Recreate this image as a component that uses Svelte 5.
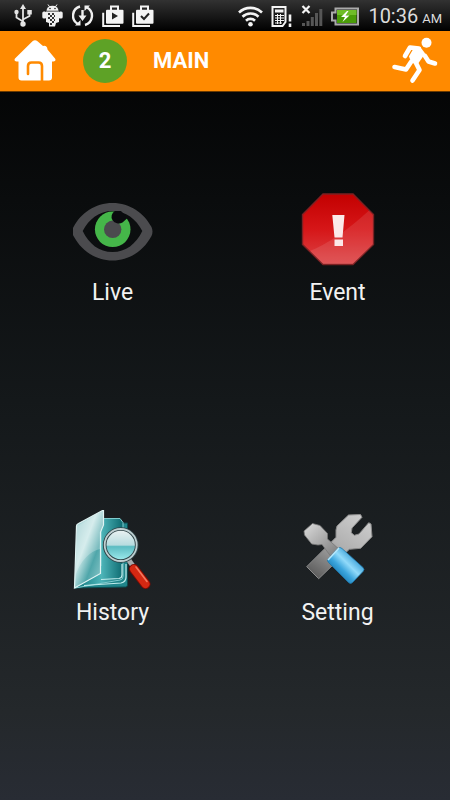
<script lang="ts">
    type MenuItem = { id: string, label: string }

    let alarms = $state(2)
    const items: MenuItem[] = [
        { id: "live", label: "Live" },
        { id: "event", label: "Event" },
        { id: "history", label: "History" },
        { id: "setting", label: "Setting" },
    ]
</script>

<div class="screen">
    <div class="status">
        <div class="tray">
            <!-- usb -->
            <svg width="22" height="23" viewBox="0 0 22 23" fill="none" stroke="#e4e4e4" stroke-width="1.8">
                <path d="M11 4v17M11 17.500 4.500 13.500V8M11 15.500l6.500-3.500V8" />
                <path d="M11 0 8 5h6z" fill="#e4e4e4" stroke="none" />
                <circle cx="4.500" cy="8" r="2.200" fill="#e4e4e4" stroke="none" />
                <circle cx="11" cy="20" r="2.700" fill="#e4e4e4" stroke="none" />
                <path d="M15.300 6h4.500v4.500h-4.500z" fill="#e4e4e4" stroke="none" />
            </svg>
            <!-- android -->
            <svg width="22" height="23" viewBox="0 0 22 23" fill="#f0f0f0">
                <path d="M4.500 6.700a6 5 0 0 1 12 0z" />
                <path d="M6 .5l2 3M15 .5l-2 3" stroke="#f0f0f0" />
                <path d="M4 7.500h13V18l-3 1-1 3.500H7V19l-3-1z" />
                <rect x=".3" y="7.500" width="4" height="7" rx="1.500" />
                <rect x="16.700" y="7.500" width="4" height="7" rx="1.500" />
                <circle cx="8" cy="4.500" r=".8" fill="#222" />
                <circle cx="13" cy="4.500" r=".8" fill="#222" />
                <path d="M6 9h2v2H6zM10 9h2v2h-2zM8 11h2v2H8zM12 11h1v2h-1zM6 13h2v2H6zM10 13h2v2h-2zM8 15h2v2H8zM12 15h1v2h-1zM10 17h2v2h-2zM8 19h2v2H8z" fill="#333" />
            </svg>
            <!-- sync -->
            <svg width="22" height="23" viewBox="0 0 22 23" fill="none" stroke="#f0f0f0" stroke-width="2.400">
                <path d="M8 2.500a9.500 9.500 0 0 0-2 17.500M13 21a9.500 9.500 0 0 0 2-17.500" />
                <path d="M10.500 6v8" />
                <path d="M6.500 11.500h8L10.500 17zM3 21.500h5.500V16zM18 1.500h-5.500V7z" fill="#f0f0f0" stroke="none" />
            </svg>
            <!-- store -->
            <svg width="22" height="23" viewBox="0 0 22 23" fill="none" stroke="#f4f4f4" stroke-width="2">
                <path d="M1.200 8.700V22H18" />
                <path d="M9 6V2.500h7V6" />
                <rect x="4" y="5.700" width="17.500" height="14" rx="1" fill="#f4f4f4" stroke="none" />
                <path d="M10 8.500v7l6-3.500z" fill="#222" stroke="none" />
            </svg>
            <!-- store, updated -->
            <svg width="22" height="23" viewBox="0 0 22 23" fill="none" stroke="#f4f4f4" stroke-width="2">
                <path d="M1.200 8.700V22H18" />
                <path d="M9 6V2.500h7V6" />
                <rect x="4" y="5.700" width="17.500" height="14" rx="1" fill="#f4f4f4" stroke="none" />
                <path d="M9 12l3 3 5-5.500" stroke="#222" />
            </svg>
        </div>
        <div class="tray">
            <!-- wifi -->
            <svg width="25" height="23" viewBox="0 0 25 23" fill="none" stroke="#f4f4f4" stroke-width="2.600">
                <path d="M1 8.500a16.500 16.500 0 0 1 23 0M4.500 12.700a11.500 11.500 0 0 1 16 0M8 16.700a6.500 6.500 0 0 1 9 0" />
                <circle cx="12.500" cy="20.300" r="2.300" fill="#f4f4f4" stroke="none" />
            </svg>
            <!-- sim card -->
            <svg width="21" height="23" viewBox="0 0 21 23" fill="none" stroke="#f4f4f4">
                <path d="M1.500 3h13v15l-3 4h-10z" stroke-width="2" />
                <path d="M4 7h8.500" stroke-width="3" />
                <path d="M4 11.500h9M4 14h9M4 16.500h9M4 19h7M6.500 10v10M9.500 10v10" />
                <path d="M19 10.500v7M19 19.500V23" stroke-width="2.600" />
            </svg>
            <!-- no signal -->
            <svg width="23" height="23" viewBox="0 0 23 23" fill="#565656">
                <path d="M2 19h3v3H2zM6.500 17h3v5h-3zM10.800 13h3v9h-3zM15 9h3v13h-3zM19.300 5h3v17h-3z" />
                <path d="M2.500 2l7 7M9.500 2l-7 7" stroke="#f4f4f4" stroke-width="2.200" />
            </svg>
            <!-- battery -->
            <svg width="29" height="23" viewBox="0 0 29 23">
                <path d="M4.500 4.500H27v16H4.500v-4H1v-8h3.500z" fill="#222" stroke="#aaa" stroke-width="2" />
                <path d="M6 6h19.500v13H6z" fill="#4a9c08" />
                <path d="M6 6h19.500v5H6z" fill="#6fbd28" />
                <path d="M16 7l-6 6h4l-2.500 5 7-6.500h-4L17.500 7z" fill="#fff" />
            </svg>
            <time>10:36 <small>AM</small></time>
        </div>
    </div>

    <header>
        <button type="button" class="home" aria-label="Home">
            <svg width="42" height="44" viewBox="0 0 42 44">
                <path d="M18.500 2.300Q21 .3 23.500 2.300L29 7q4-1 4.500 3.500l7.500 9q1.500 2.500-1.500 3H38v16q0 3-3 3H7.500q-3 0-3-3v-16H2.500q-3-.5-1.500-3z" fill="#fff" />
                <path d="M14 35V27q0-3.500 3.500-3.500h7q3.500 0 3.500 3.500v15" fill="none" stroke="#ff8a00" stroke-width="2.600" stroke-linecap="round" />
            </svg>
        </button>
        <span class="badge">{alarms}</span>
        <h1>MAIN</h1>
        <button type="button" class="exit" aria-label="Exit">
            <svg width="48" height="48" viewBox="0 0 48 48" fill="none" stroke="#fff" stroke-width="4.600" stroke-linecap="round" stroke-linejoin="round">
                <circle cx="36.500" cy="5.800" r="5" fill="#fff" stroke="none" />
                <path d="M15 19l5-8.500 9 1" />
                <path d="M25 11l6 1.500 3 4-7 10-5-2-2-5z" fill="#fff" stroke-width="2" />
                <path d="M35 19l3.500 5.500 6.500 2M21 25l-5 7.500L4.500 30M25 24l4.500 9-7 10.500" />
            </svg>
        </button>
    </header>

    <main>
        {#each items as item (item.id)}
            <button type="button" class="item">
                {#if item.id === "live"}
                    <svg width="80" height="80" viewBox="1 1 80 80">
                        <path d="M1.500 38C9 24 23 14 40.500 14S72 24 79.500 38q2 4.500 0 9C72 61 58 71.500 40.500 71.500S9 61 1.500 47q-2.500-4.500 0-9zM10.700 42C17 55 27 63 40.500 63S64 55 70.300 42C64 30 54 22 40.500 22S17 30 10.700 42z" fill="#4b4b4e" fill-rule="evenodd" />
                        <circle cx="40.700" cy="40.300" r="17.800" fill="#45b649" />
                        <circle cx="40.700" cy="40.300" r="8.700" fill="#4b4b4e" />
                        <path d="M43 22a7 6.500 0 1 0 7.500 11.500L55.500 29 49 22z" fill="#0a0b0e" />
                    </svg>
                {:else if item.id === "event"}
                    <svg width="80" height="80" viewBox="1 1 80 80">
                        <defs>
                            <linearGradient id="stop" x2="0" y2="1">
                                <stop offset="0" stop-color="#c30000" />
                                <stop offset=".5" stop-color="#d61618" />
                                <stop offset="1" stop-color="#dc4446" />
                            </linearGradient>
                        </defs>
                        <path d="M26 5h30l20.500 20.500v30L56 75.500H26L5.500 55.500v-30z" fill="url(#stop)" stroke="#7c2022" stroke-width="1.400" />
                        <path d="M72 21.500l4 4.500v29.500L56 75H26L13 62Q40 51 72 21.500z" fill="#fff" opacity=".1" />
                        <path d="M35.300 26h12.200l-2 22.500h-8zM37.500 50.500H46V57h-8.500z" fill="#fbe9e9" />
                    </svg>
                {:else if item.id === "history"}
                    <svg width="80" height="80" viewBox="1 1 80 80">
                        <defs>
                            <linearGradient id="flap" x2="1" y2="1">
                                <stop offset="0" stop-color="#8cc4c6" />
                                <stop offset=".4" stop-color="#c9e7e7" />
                                <stop offset=".65" stop-color="#4fa6aa" />
                                <stop offset="1" stop-color="#9fd2d3" />
                            </linearGradient>
                            <linearGradient id="back">
                                <stop offset="0" stop-color="#0c7379" />
                                <stop offset=".55" stop-color="#4db5b9" />
                                <stop offset="1" stop-color="#0d6a70" />
                            </linearGradient>
                            <linearGradient id="lens" x2="0" y2="1">
                                <stop offset="0" stop-color="#eef3f3" />
                                <stop offset=".5" stop-color="#b8dcdf" />
                                <stop offset=".55" stop-color="#5cbcc2" />
                                <stop offset="1" stop-color="#a2eef0" />
                            </linearGradient>
                        </defs>
                        <path d="M30 14h25.500v62q0 2-2 2L3 79l26-22z" fill="#20858a" stroke="#0c4c50" />
                        <path d="M29 9.500h19l3 4v54q0 3-3 3.500L3 79l26-22z" fill="url(#back)" stroke="#80cccf" />
                        <path d="M54 55v13q0 5-5 6L12 76.500M50 55v11q0 3-3 3.500l-18 1" fill="none" stroke="#c0ecec" stroke-width="1.200" />
                        <path d="M4.500 17q0-1.500 2-2.500L31.500 1v15l-3 7v41.500L2.500 79z" fill="url(#flap)" stroke="#e0f3f3" stroke-width="1.200" />
                        <path d="M5 17L31 2v14l-3 7v17Q12 44 4 65z" fill="#fff" opacity=".25" />
                        <path d="M56 50l5 7" stroke="#a4aaac" stroke-width="5" />
                        <path d="M62 60l11.500 15" stroke="#7d0c05" stroke-width="10" stroke-linecap="round" />
                        <path d="M62 60l11.500 15" stroke="#d42812" stroke-width="8" stroke-linecap="round" />
                        <path d="M64 58l11 14.500" stroke="#f3795f" stroke-width="1.600" stroke-linecap="round" />
                        <circle cx="48.700" cy="36" r="16" fill="url(#lens)" stroke="#304448" stroke-width="3.600" />
                        <circle cx="48.700" cy="36" r="16" fill="none" stroke="#bfd0d2" stroke-width="1.800" />
                    </svg>
                {:else}
                    <svg width="80" height="80" viewBox="1 1 80 80">
                        <defs>
                            <linearGradient id="steel" x1=".9" x2=".2" y2="1">
                                <stop offset="0" stop-color="#cfcfcf" />
                                <stop offset=".5" stop-color="#b0b0b0" />
                                <stop offset="1" stop-color="#5e5e5e" />
                            </linearGradient>
                            <linearGradient id="blade" x2="1" y2="1">
                                <stop offset="0" stop-color="#dcdcdc" />
                                <stop offset="1" stop-color="#757575" />
                            </linearGradient>
                            <linearGradient id="grip" x1=".3" y1=".8" x2=".8" y2=".3">
                                <stop offset="0" stop-color="#1c7db5" />
                                <stop offset=".3" stop-color="#3ba5dd" />
                                <stop offset=".6" stop-color="#91dafa" />
                                <stop offset="1" stop-color="#3a9fd6" />
                            </linearGradient>
                        </defs>
                        <path d="M39 21l1-4L51.500 6l12-.5L65 8.300 55 19l-.7 4.700 3 2.600L62 25l9.700-11.300L74 15l1 12.700-11.300 11.600-11.400 1-30.600 29.400-12-12L39 28.300z" fill="url(#steel)" stroke="#8b8b8b" stroke-linejoin="round" />
                        <path d="M7 22l8.500-7.500 7.500 2 7.500 8v5.500L43 41l-8 8-10-13.500-4 .5-6.300-1L7.500 26z" fill="url(#blade)" stroke="#777" stroke-width=".8" stroke-linejoin="round" />
                        <path d="M41 39.500q2-2 4 0l21 19q2 2 0 4l-10.500 11q-2 2-4 0l-20-20q-2-2 0-4z" fill="url(#grip)" stroke="#1e76a8" stroke-width=".8" />
                        <path d="M42 39L31 51" stroke="#b5e7fb" stroke-width="1.600" />
                    </svg>
                {/if}
                <span>{item.label}</span>
            </button>
        {/each}
    </main>
</div>

<style>
    :global(body) {
        margin: 0;
        background: #000;
    }

    .screen {
        display: flex;
        flex-direction: column;
        min-height: 100vh;
        font-family: Roboto, "Noto Sans", sans-serif;
        color: #f2f2f2;
        background: linear-gradient(#000, #14181a 50%, #24282b 89%, #282c34);
    }

    svg {
        display: block;
        flex: none;
    }

    button {
        padding: 0;
        border: 0;
        background: none;
        color: inherit;
        font: inherit;
        cursor: pointer;
    }

    .status {
        display: flex;
        justify-content: space-between;
        align-items: center;
        height: 31px;
        padding: 0 8px 0 12px;
        background: linear-gradient(#323232, #000);
    }

    .tray {
        display: flex;
        align-items: center;
        gap: 8px;
    }

    time {
        color: #dcdcdc;
        font-size: 20px;
        white-space: nowrap;

        & small {
            margin-left: -1px;
            font-size: 13px;
        }
    }

    header {
        display: flex;
        align-items: center;
        height: 60px;
        padding: 0 12px 0 14px;
        border-bottom: 1px solid #6b3a00;
        background: #ff8a00;
        color: #fff;
    }

    .badge {
        width: 44px;
        margin-left: 27px;
        border-radius: 50%;
        background: #5ea226;
        font-size: 22px;
        font-weight: 700;
        line-height: 44px;
        text-align: center;
    }

    h1 {
        flex: 1;
        margin: 0 0 0 26px;
        font-size: 22px;
        font-weight: 700;
        line-height: 30px;
    }

    main {
        flex: 1;
        display: grid;
        grid-template-columns: 1fr 1fr;
        grid-template-rows: 1fr 1fr;
        padding-bottom: 68px;
    }

    .item {
        display: flex;
        flex-direction: column;
        align-items: center;
        justify-content: center;
        gap: 8px;
        padding-bottom: 6px;
        font-size: 23px;
        line-height: 30px;
    }
</style>
